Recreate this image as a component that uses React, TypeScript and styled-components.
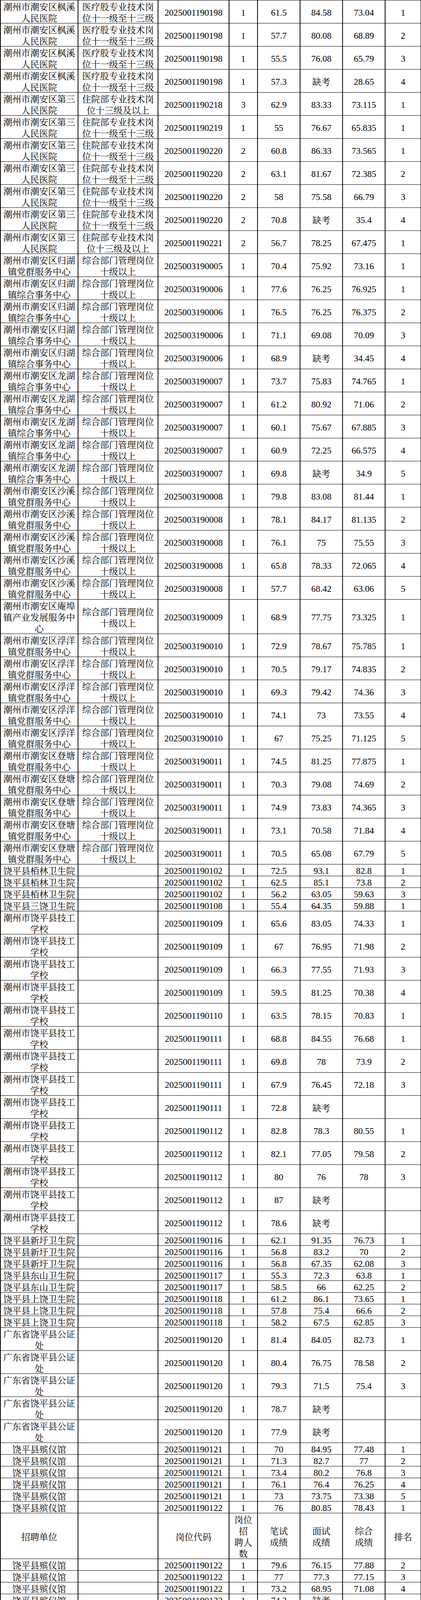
import React from "react";
import styled, { createGlobalStyle } from "styled-components";

const CJK_STACK = `"Noto Serif CJK SC", "Noto Sans CJK SC", "Liberation Serif", serif`;
const NUM_STACK = `"Liberation Serif", "Noto Serif CJK SC", "Noto Sans CJK SC", serif`;

const GlobalStyle = createGlobalStyle`
  html, body {
    margin: 0;
    padding: 0;
    background: #ffffff;
  }
  body {
    font-family: ${NUM_STACK};
  }
`;

const Sheet = styled.table`
  width: 1078px;
  table-layout: fixed;
  border-collapse: collapse;
  background: #ffffff;
  color: #000000;
  font-size: 23px;
`;

const Col = styled.col<{ $w: number }>`
  width: ${(p) => p.$w}px;
`;

const Row = styled.tr`
  background: #ffffff;
`;

const Cell = styled.td<{ $cjk: boolean }>`
  border-style: solid;
  border-color: #000000;
  border-width: 1px 2px;
  padding: 0 2px;
  text-align: center;
  vertical-align: middle;
  font-family: ${(p) => (p.$cjk ? CJK_STACK : NUM_STACK)};
  font-weight: 400;
  font-size: 23px;
  color: #000000;
`;

const Line = styled.div<{ $num?: boolean }>`
  box-sizing: border-box;
  height: 29px;
  padding-top: ${(p) => (p.$num ? 2 : 1)}px;
  line-height: 29px;
  white-space: nowrap;
  text-align: center;
`;

type DataRow = [string, string, string, string, string, string, string, string];
type Entry = { kind: "data"; cells: DataRow } | { kind: "header" };

const FX = "潮州市潮安区枫溪人民医院";
const YL = "医疗股专业技术岗位十一级至十三级";
const DS = "潮州市潮安区第三人民医院";
const ZY13 = "住院部专业技术岗位十三级及以上";
const ZY11 = "住院部专业技术岗位十一级至十三级";
const ZH = "综合部门管理岗位十级以上";
const GHDQ = "潮州市潮安区归湖镇党群服务中心";
const GHZH = "潮州市潮安区归湖镇综合事务中心";
const LH = "潮州市潮安区龙湖镇综合事务中心";
const SX = "潮州市潮安区沙溪镇党群服务中心";
const AB = "潮州市潮安区庵埠镇产业发展服务中心";
const FY = "潮州市潮安区浮洋镇党群服务中心";
const DT = "潮州市潮安区登塘镇党群服务中心";
const BL = "饶平县栢林卫生院";
const SR = "饶平县三饶卫生院";
const JG = "潮州市饶平县技工学校";
const XX = "饶平县新圩卫生院";
const DSN = "饶平县东山卫生院";
const SRW = "饶平县上饶卫生院";
const GZ = "广东省饶平县公证处";
const BY = "饶平县殡仪馆";
const ZYY = "饶平县中医医院（饶平县华侨医院）";
const DC = "饶平县大埕卫生院";
const QD = "饶平县钱东中心卫生院";
const HG = "饶平县黄冈卫生院";
const TD = "饶平县土地整备中心";
const JN = "暨南大学附属第一医院潮汕医院";
const QK = "缺考";

const d = (...c: DataRow): Entry => ({ kind: "data", cells: c });

const entries: Entry[] = [
  d(FX, YL, "2025001190198", "1", "61.5", "84.58", "73.04", "1"),
  d(FX, YL, "2025001190198", "1", "57.7", "80.08", "68.89", "2"),
  d(FX, YL, "2025001190198", "1", "55.5", "76.08", "65.79", "3"),
  d(FX, YL, "2025001190198", "1", "57.3", QK, "28.65", "4"),
  d(DS, ZY13, "2025001190218", "3", "62.9", "83.33", "73.115", "1"),
  d(DS, ZY11, "2025001190219", "1", "55", "76.67", "65.835", "1"),
  d(DS, ZY11, "2025001190220", "2", "60.8", "86.33", "73.565", "1"),
  d(DS, ZY11, "2025001190220", "2", "63.1", "81.67", "72.385", "2"),
  d(DS, ZY11, "2025001190220", "2", "58", "75.58", "66.79", "3"),
  d(DS, ZY11, "2025001190220", "2", "70.8", QK, "35.4", "4"),
  d(DS, ZY13, "2025001190221", "2", "56.7", "78.25", "67.475", "1"),
  d(GHDQ, ZH, "2025003190005", "1", "70.4", "75.92", "73.16", "1"),
  d(GHZH, ZH, "2025003190006", "1", "77.6", "76.25", "76.925", "1"),
  d(GHZH, ZH, "2025003190006", "1", "76.5", "76.25", "76.375", "2"),
  d(GHZH, ZH, "2025003190006", "1", "71.1", "69.08", "70.09", "3"),
  d(GHZH, ZH, "2025003190006", "1", "68.9", QK, "34.45", "4"),
  d(LH, ZH, "2025003190007", "1", "73.7", "75.83", "74.765", "1"),
  d(LH, ZH, "2025003190007", "1", "61.2", "80.92", "71.06", "2"),
  d(LH, ZH, "2025003190007", "1", "60.1", "75.67", "67.885", "3"),
  d(LH, ZH, "2025003190007", "1", "60.9", "72.25", "66.575", "4"),
  d(LH, ZH, "2025003190007", "1", "69.8", QK, "34.9", "5"),
  d(SX, ZH, "2025003190008", "1", "79.8", "83.08", "81.44", "1"),
  d(SX, ZH, "2025003190008", "1", "78.1", "84.17", "81.135", "2"),
  d(SX, ZH, "2025003190008", "1", "76.1", "75", "75.55", "3"),
  d(SX, ZH, "2025003190008", "1", "65.8", "78.33", "72.065", "4"),
  d(SX, ZH, "2025003190008", "1", "57.7", "68.42", "63.06", "5"),
  d(AB, ZH, "2025003190009", "1", "68.9", "77.75", "73.325", "1"),
  d(FY, ZH, "2025003190010", "1", "72.9", "78.67", "75.785", "1"),
  d(FY, ZH, "2025003190010", "1", "70.5", "79.17", "74.835", "2"),
  d(FY, ZH, "2025003190010", "1", "69.3", "79.42", "74.36", "3"),
  d(FY, ZH, "2025003190010", "1", "74.1", "73", "73.55", "4"),
  d(FY, ZH, "2025003190010", "1", "67", "75.25", "71.125", "5"),
  d(DT, ZH, "2025003190011", "1", "74.5", "81.25", "77.875", "1"),
  d(DT, ZH, "2025003190011", "1", "70.3", "79.08", "74.69", "2"),
  d(DT, ZH, "2025003190011", "1", "74.9", "73.83", "74.365", "3"),
  d(DT, ZH, "2025003190011", "1", "73.1", "70.58", "71.84", "4"),
  d(DT, ZH, "2025003190011", "1", "70.5", "65.08", "67.79", "5"),
  d(BL, "", "2025001190102", "1", "72.5", "93.1", "82.8", "1"),
  d(BL, "", "2025001190102", "1", "62.5", "85.1", "73.8", "2"),
  d(BL, "", "2025001190102", "1", "56.2", "63.05", "59.63", "3"),
  d(SR, "", "2025001190108", "1", "55.4", "64.35", "59.88", "1"),
  d(JG, "", "2025001190109", "1", "65.6", "83.05", "74.33", "1"),
  d(JG, "", "2025001190109", "1", "67", "76.95", "71.98", "2"),
  d(JG, "", "2025001190109", "1", "66.3", "77.55", "71.93", "3"),
  d(JG, "", "2025001190109", "1", "59.5", "81.25", "70.38", "4"),
  d(JG, "", "2025001190110", "1", "63.5", "78.15", "70.83", "1"),
  d(JG, "", "2025001190111", "1", "68.8", "84.55", "76.68", "1"),
  d(JG, "", "2025001190111", "1", "69.8", "78", "73.9", "2"),
  d(JG, "", "2025001190111", "1", "67.9", "76.45", "72.18", "3"),
  d(JG, "", "2025001190111", "1", "72.8", QK, "", ""),
  d(JG, "", "2025001190112", "1", "82.8", "78.3", "80.55", "1"),
  d(JG, "", "2025001190112", "1", "82.1", "77.05", "79.58", "2"),
  d(JG, "", "2025001190112", "1", "80", "76", "78", "3"),
  d(JG, "", "2025001190112", "1", "87", QK, "", ""),
  d(JG, "", "2025001190112", "1", "78.6", QK, "", ""),
  d(XX, "", "2025001190116", "1", "62.1", "91.35", "76.73", "1"),
  d(XX, "", "2025001190116", "1", "56.8", "83.2", "70", "2"),
  d(XX, "", "2025001190116", "1", "56.8", "67.35", "62.08", "3"),
  d(DSN, "", "2025001190117", "1", "55.3", "72.3", "63.8", "1"),
  d(DSN, "", "2025001190117", "1", "58.5", "66", "62.25", "2"),
  d(SRW, "", "2025001190118", "1", "61.2", "86.1", "73.65", "1"),
  d(SRW, "", "2025001190118", "1", "57.8", "75.4", "66.6", "2"),
  d(SRW, "", "2025001190118", "1", "58.2", "67.5", "62.85", "3"),
  d(GZ, "", "2025001190120", "1", "81.4", "84.05", "82.73", "1"),
  d(GZ, "", "2025001190120", "1", "80.4", "76.75", "78.58", "2"),
  d(GZ, "", "2025001190120", "1", "79.3", "71.5", "75.4", "3"),
  d(GZ, "", "2025001190120", "1", "78.7", QK, "", ""),
  d(GZ, "", "2025001190120", "1", "77.9", QK, "", ""),
  d(BY, "", "2025001190121", "1", "70", "84.95", "77.48", "1"),
  d(BY, "", "2025001190121", "1", "71.3", "82.7", "77", "2"),
  d(BY, "", "2025001190121", "1", "73.4", "80.2", "76.8", "3"),
  d(BY, "", "2025001190121", "1", "76.1", "76.4", "76.25", "4"),
  d(BY, "", "2025001190121", "1", "73", "73.75", "73.38", "5"),
  d(BY, "", "2025001190122", "1", "76", "80.85", "78.43", "1"),
  { kind: "header" },
  d(BY, "", "2025001190122", "1", "79.6", "76.15", "77.88", "2"),
  d(BY, "", "2025001190122", "1", "77", "77.3", "77.15", "3"),
  d(BY, "", "2025001190122", "1", "73.2", "68.95", "71.08", "4"),
  d(BY, "", "2025001190122", "1", "74.3", QK, "", ""),
  d(BY, "", "2025001190123", "1", "60.3", "75.35", "67.83", "1"),
  d(BY, "", "2025001190123", "1", "56.4", "78.3", "67.35", "2"),
  d(ZYY, "", "2025001190128", "2", "60.3", "78.75", "69.53", "1"),
  d(ZYY, "", "2025001190128", "2", "62.4", "74.55", "68.48", "2"),
  d(ZYY, "", "2025001190129", "2", "57.7", "83.6", "70.65", "1"),
  d(DC, "", "2025001190131", "1", "62", "80.5", "71.25", "1"),
  d(DC, "", "2025001190131", "1", "55.3", "64.05", "59.68", "2"),
  d(QD, "", "2025001190133", "1", "59.9", "73.25", "66.58", "1"),
  d(HG, "", "2025001190134", "1", "71.1", "80.7", "75.9", "1"),
  d(HG, "", "2025001190134", "1", "64.7", "75.1", "69.9", "2"),
  d(HG, "", "2025001190134", "1", "60.6", "73.45", "67.03", "3"),
  d(TD, "", "2025001190135", "1", "73.4", "86.35", "79.88", "1"),
  d(TD, "", "2025001190135", "1", "75.1", "84.15", "79.63", "2"),
  d(TD, "", "2025001190135", "1", "75", "82.15", "78.58", "3"),
  d(TD, "", "2025001190135", "1", "72.1", "74.2", "73.15", "4"),
  d(TD, "", "2025001190136", "1", "77.8", "82.7", "80.25", "1"),
  d(TD, "", "2025001190136", "1", "67.9", "82.65", "75.28", "2"),
  d(TD, "", "2025001190136", "1", "71.7", "77.6", "74.65", "3"),
  d(TD, "", "2025001190136", "1", "68.1", "76.65", "72.38", "4"),
  d(TD, "", "2025001190136", "1", "68.2", "66.4", "67.3", "5"),
  d(JN, "", "2025001190137", "3", "60.5", "68.3", "64.4", "1"),
];

const widths = [199, 205, 182, 73, 109, 109, 109, 92];

const headerCells: string[][] = [
  ["招聘单位"],
  [],
  ["岗位代码"],
  ["岗位", "招", "聘人", "数"],
  ["笔试", "成绩"],
  ["面试", "成绩"],
  ["综合", "成绩"],
  ["排名"],
];

const isCjk = (s: string) => /[^\x00-\x7f]/.test(s);

// Cells wrap every eight characters, like the sheet; the bracketed name keeps its brackets with their neighbours.
const wrapText = (s: string): string[] => {
  if (!s) return [];
  if (s === ZYY) return ["饶平县中医医院", "（饶平县华侨医", "院）"];
  const out: string[] = [];
  for (let i = 0; i < s.length; i += 8) out.push(s.slice(i, i + 8));
  return out;
};

const CellText: React.FC<{ lines: string[]; num?: boolean }> = ({ lines, num }) => (
  <>
    {lines.map((l, i) => (
      <Line key={i} $num={num}>
        {l}
      </Line>
    ))}
  </>
);

export default function App() {
  return (
    <>
      <GlobalStyle />
      <Sheet>
        <colgroup>
          {widths.map((w, i) => (
            <Col key={i} $w={w} />
          ))}
        </colgroup>
        <tbody>
          {entries.map((e, i) =>
            e.kind === "header" ? (
              <Row key={i}>
                {headerCells.map((lines, j) => (
                  <Cell key={j} $cjk={true}>
                    <CellText lines={lines} />
                  </Cell>
                ))}
              </Row>
            ) : (
              <Row key={i}>
                {e.cells.map((c, j) => {
                  const cjk = j < 2 || isCjk(c);
                  return (
                    <Cell key={j} $cjk={cjk}>
                      <CellText lines={j < 2 ? wrapText(c) : c ? [c] : []} num={!cjk} />
                    </Cell>
                  );
                })}
              </Row>
            )
          )}
        </tbody>
      </Sheet>
    </>
  );
}
